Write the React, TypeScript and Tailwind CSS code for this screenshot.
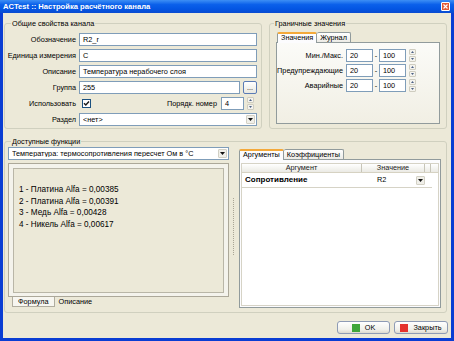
import React from "react";

function Spin() {
  return (
    <div className="w-[7px] h-[13px] flex flex-col gap-[1px] shrink-0">
      <div className="flex-1 bg-[#f4f3ee] border border-[#cfcdc0] rounded-[1px] flex items-center justify-center">
        <svg width="3" height="2" viewBox="0 0 3 2"><path d="M1.5 0L3 2H0z" fill="#4d6185" /></svg>
      </div>
      <div className="flex-1 bg-[#f4f3ee] border border-[#cfcdc0] rounded-[1px] flex items-center justify-center">
        <svg width="3" height="2" viewBox="0 0 3 2"><path d="M0 0H3L1.5 2z" fill="#4d6185" /></svg>
      </div>
    </div>
  );
}

function ArrowBtn() {
  return (
    <div className="w-[9px] h-[9px] bg-[#f0efe9] border border-[#d2d0c4] rounded-[1px] flex items-center justify-center shrink-0">
      <svg width="5" height="3" viewBox="0 0 5 3"><path d="M0 0H5L2.5 3z" fill="#111" /></svg>
    </div>
  );
}

function Field({ value, className = "" }: { value: string; className?: string }) {
  return (
    <div className={`h-[13px] bg-white border border-[#7f9db9] flex items-center pl-[3px] leading-none whitespace-nowrap overflow-hidden ${className}`}>
      {value}
    </div>
  );
}

function Combo({ value, className = "" }: { value: string; className?: string }) {
  return (
    <div className={`h-[13px] bg-white border border-[#7f9db9] flex items-center pl-[3px] pr-[1px] leading-none whitespace-nowrap ${className}`}>
      <span className="flex-1 overflow-hidden">{value}</span>
      <ArrowBtn />
    </div>
  );
}

function Label({ children, w }: { children: React.ReactNode; w: string }) {
  return <div className={`${w} shrink-0 text-right whitespace-nowrap leading-none`}>{children}</div>;
}

function Button({ color, label }: { color: string; label: string }) {
  return (
    <div className="h-[13px] flex-1 border border-[#8e9bb5] rounded-[3px] bg-[linear-gradient(#ffffff,#f0f0ea_70%,#dcdad0)] flex items-center justify-center gap-[5px] leading-none">
      <span className={`w-[8px] h-[8px] ${color}`} />
      <span>{label}</span>
    </div>
  );
}

export default function App() {
  return (
    <div className="w-[454px] h-[341px] flex flex-col bg-[#0a3dd3] font-['Liberation_Sans',Arial,sans-serif] text-[7.3px] text-black overflow-hidden">
      {/* Title bar */}
      <div className="h-[13px] shrink-0 flex items-center justify-between pl-[3px] pr-[4px] bg-[linear-gradient(#3d8ff5,#0b60ea_35%,#0355e3_70%,#0a4bd0)]">
        <span className="text-white font-bold text-[7.6px] leading-none">ACTest :: Настройка расчётного канала</span>
        <div className="w-[9px] h-[9px] rounded-[1px] border border-white bg-[#e35a35] flex items-center justify-center">
          <svg width="5" height="5" viewBox="0 0 5 5"><path d="M0.5 0.5L4.5 4.5M4.5 0.5L0.5 4.5" stroke="#fff" strokeWidth="1.1" /></svg>
        </div>
      </div>

      {/* Body */}
      <div className="flex-1 mx-[3px] mb-[3px] bg-[#ece9d8] flex flex-col">
        {/* Top row */}
        <div className="flex mt-[5px] ml-[1px] gap-[7px]">
          {/* Left group */}
          <fieldset className="w-[258px] h-[111px] border border-[#d0d0bf] rounded-[3px]">
            <legend className="ml-[6px] px-[1px] leading-[11px]">Общие свойства канала</legend>
            <div className="flex flex-col gap-[3px] pt-[4px] pr-[4px]">
              <div className="flex items-center gap-[3px]">
                <Label w="w-[71px]">Обозначение</Label>
                <Field value="R2_r" className="flex-1" />
              </div>
              <div className="flex items-center gap-[3px]">
                <Label w="w-[71px]">Единица измерения</Label>
                <Field value="C" className="flex-1" />
              </div>
              <div className="flex items-center gap-[3px]">
                <Label w="w-[71px]">Описание</Label>
                <Field value="Температура нерабочего слоя" className="flex-1" />
              </div>
              <div className="flex items-center gap-[3px]">
                <Label w="w-[71px]">Группа</Label>
                <Field value="255" className="flex-1" />
                <div className="w-[14px] h-[13px] border border-[#5a7bb5] rounded-[2px] bg-[linear-gradient(#ffffff,#e8e8e0)] flex items-end justify-center pb-[2px] leading-none text-[7px]">...</div>
              </div>
              <div className="flex items-center gap-[3px] h-[13px]">
                <Label w="w-[71px]">Использовать</Label>
                <div className="ml-[3px] w-[9px] h-[9px] bg-white border border-[#1c5180] flex items-center justify-center">
                  <svg width="7" height="7" viewBox="0 0 7 7"><path d="M1 3.2L2.8 5L6 1.5" stroke="#1a1a1a" strokeWidth="1.4" fill="none" /></svg>
                </div>
                <div className="flex-1" />
                <span className="whitespace-nowrap leading-none mr-[1px]">Порядк. номер</span>
                <Field value="4" className="w-[23px]" />
                <Spin />
                <div className="w-[0px]" />
              </div>
              <div className="flex items-center gap-[3px]">
                <Label w="w-[71px]">Раздел</Label>
                <Combo value="<нет>" className="flex-1" />
              </div>
            </div>
          </fieldset>

          {/* Right group */}
          <fieldset className="w-[178px] h-[111px] border border-[#d0d0bf] rounded-[3px]">
            <legend className="ml-[4px] px-[1px] leading-[11px]">Граничные значения</legend>
            <div className="flex flex-col px-[6px] pt-[2px]">
              <div className="flex items-end h-[11px] pl-[1px]">
                <div className="h-[11px] px-[3px] bg-[#fcfcfe] border border-[#919b9c] border-b-0 border-t-2 border-t-[#f4a93a] rounded-t-[2px] flex items-center leading-none relative z-10 -mb-[1px] pb-[1px]">Значения</div>
                <div className="h-[10px] px-[3px] bg-[linear-gradient(#ffffff,#ecebe6)] border border-[#919b9c] border-l-0 border-b-0 rounded-t-[2px] flex items-center leading-none">Журнал</div>
              </div>
              <div className="h-[82px] bg-[linear-gradient(#fbfbf8,#f1efe4)] border border-[#919b9c] flex flex-col gap-[2px] pt-[6px]">
                {[
                  ["Мин./Макс.", "20", "100"],
                  ["Предупреждающие", "20", "100"],
                  ["Аварийные", "20", "100"],
                ].map(([l, a, b]) => (
                  <div key={l} className="flex items-center">
                    <Label w="w-[66px]">{l}</Label>
                    <Field value={a} className="w-[27px] ml-[3px]" />
                    <span className="w-[6px] text-center leading-none">-</span>
                    <Field value={b} className="w-[27px]" />
                    <div className="ml-[3px]"><Spin /></div>
                  </div>
                ))}
              </div>
            </div>
          </fieldset>
        </div>

        {/* Bottom group */}
        <fieldset className="mt-[7px] ml-[1px] w-[443px] h-[177px] border border-[#d0d0bf] rounded-[3px]">
          <legend className="ml-[6px] px-[1px] leading-[11px]">Доступные функции</legend>
          <div className="flex pl-[3px] pr-[5px] h-[165px]">
            {/* left column */}
            <div className="w-[221px] flex flex-col">
              <Combo value="Температура: термосопротивления пересчет Ом в °C" />
              <div className="mt-[3px] flex-1 border border-[#aca899] bg-[#f4f3ec] p-[4px] pb-[3px] flex flex-col">
                <div className="flex-1 border border-[#b9b6a7] bg-[#ece9d8] pt-[15px] pl-[5px] text-[8.2px] leading-[11.7px] whitespace-nowrap">
                  <div>1 - Платина Alfa = 0,00385</div>
                  <div>2 - Платина Alfa = 0,00391</div>
                  <div>3 - Медь Alfa = 0,00428</div>
                  <div>4 - Никель Alfa = 0,00617</div>
                </div>
              </div>
              <div className="flex h-[11px] pl-[4px] mb-[4px] items-start">
                <div className="h-[10px] px-[5px] bg-[#f7f6f0] border border-[#b0ad9f] border-t-0 flex items-center leading-none">Формула</div>
                <div className="h-[10px] px-[4px] flex items-center leading-none">Описание</div>
              </div>
            </div>
            {/* splitter */}
            <div className="w-[10px] flex justify-center pt-[51px]">
              <div className="w-[2px] h-[57px] border-l border-dotted border-[#a9a595]" />
            </div>
            {/* right column */}
            <div className="flex-1 flex flex-col pt-[1px] pb-[4px]">
              <div className="flex items-end h-[11px]">
                <div className="h-[11px] px-[3px] bg-[#fcfcfe] border border-[#919b9c] border-b-0 border-t-2 border-t-[#f4a93a] rounded-t-[2px] flex items-center leading-none relative z-10 -mb-[1px] pb-[1px]">Аргументы</div>
                <div className="h-[10px] px-[3px] bg-[linear-gradient(#ffffff,#ecebe6)] border border-[#919b9c] border-l-0 border-b-0 rounded-t-[2px] flex items-center leading-none">Коэффициенты</div>
              </div>
              <div className="flex-1 border border-[#919b9c] bg-[#fcfcfe] p-[1px] pt-[3px]">
                <div className="h-full bg-white border border-[#d6d3c6] flex flex-col">
                  <div className="flex h-[9px] bg-[linear-gradient(#ffffff,#ebeae4)] border-b border-[#d6d2c2] leading-none text-[#222]">
                    <div className="w-[120px] border-r border-[#c7c5b9] flex items-center justify-center">Аргумент</div>
                    <div className="w-[63px] border-r border-[#c7c5b9] flex items-center justify-center">Значение</div>
                    <div className="w-[6px] border-r border-[#c7c5b9]" />
                  </div>
                  <div className="flex h-[15px] items-center w-[190px] border-b border-[#d6d3c6] leading-none">
                    <div className="w-[120px] pl-[3px] font-bold text-[8px]">Сопротивление</div>
                    <div className="w-[63px] flex items-center pl-[15px]">
                      <span className="flex-1">R2</span>
                      <ArrowBtn />
                    </div>
                  </div>
                </div>
              </div>
            </div>
          </div>
        </fieldset>

        {/* Buttons */}
        <div className="mt-[8px] flex justify-end gap-[4px] mr-[3px]">
          <div className="w-[53px] flex"><Button color="bg-[#3fa63a]" label="OK" /></div>
          <div className="w-[54px] flex"><Button color="bg-[#e5322d]" label="Закрыть" /></div>
        </div>
      </div>
    </div>
  );
}
